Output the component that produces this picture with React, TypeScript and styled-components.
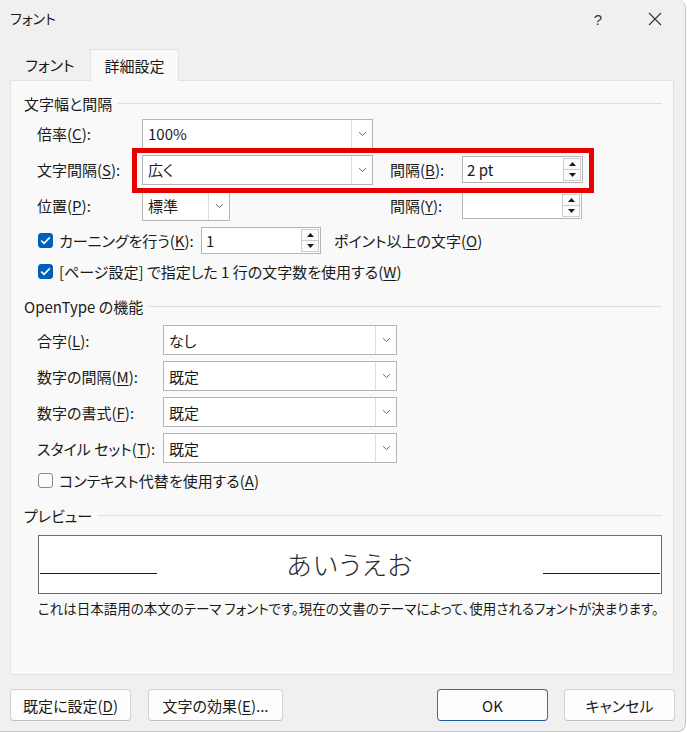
import React from 'react'
import styled, { createGlobalStyle } from 'styled-components'

const GlobalStyle = createGlobalStyle`
  html, body {
    margin: 0;
    padding: 0;
    background: #ffffff;
  }
  body {
    font-family: "Noto Sans CJK JP", "Noto Sans", sans-serif;
    font-feature-settings: "palt";
    font-size: 15px;
    color: #1a1a1a;
  }
`

const Window = styled.div`
  box-sizing: border-box;
  width: 686px;
  height: 732px;
  background: #f0f0f0;
  border-right: 1px solid #c6c6c6;
  border-bottom: 1px solid #c6c6c6;
  border-radius: 0 8px 8px 0;
  display: flex;
  flex-direction: column;
  overflow: hidden;
`

const TitleBar = styled.div`
  height: 38px;
  display: flex;
  align-items: center;
  padding-left: 10px;
  font-size: 14px;
`

const TitleText = styled.div`
  flex: 1;
  padding-bottom: 2px;
`

const CaptionButton = styled.div<{ $ml?: number; $mr?: number }>`
  width: 46px;
  height: 38px;
  margin-left: ${(p) => p.$ml ?? 0}px;
  margin-right: ${(p) => p.$mr ?? 0}px;
  display: flex;
  align-items: center;
  justify-content: center;
  font-family: "Liberation Sans", sans-serif;
  font-size: 15px;
  color: #333;
`

const TabRow = styled.div`
  display: flex;
  align-items: flex-end;
  height: 32px;
  margin-top: 10px;
  padding-left: 10px;
  position: relative;
  z-index: 1;
`

const Tab = styled.div<{ $active?: boolean }>`
  box-sizing: border-box;
  width: ${(p) => (p.$active ? 89 : 80)}px;
  height: ${(p) => (p.$active ? 32 : 30)}px;
  display: flex;
  align-items: center;
  justify-content: center;
  background: ${(p) => (p.$active ? '#f9f9f9' : 'transparent')};
  border: 1px solid ${(p) => (p.$active ? '#e2e2e2' : 'transparent')};
  border-bottom: none;
  margin-bottom: ${(p) => (p.$active ? -1 : 0)}px;
  padding-bottom: ${(p) => (p.$active ? 1 : 2)}px;
`

const Panel = styled.div`
  box-sizing: border-box;
  height: 595px;
  margin: 0 11px 0 10px;
  background: #f9f9f9;
  border: 1px solid #e2e2e2;
  padding: 12px 11px 0 13px;
  display: flex;
  flex-direction: column;
`

const SectionHeader = styled.div<{ $top?: number }>`
  height: 20px;
  display: flex;
  align-items: center;
  gap: 6px;
  margin-top: ${(p) => p.$top ?? 0}px;
`

const Rule = styled.div`
  flex: 1;
  height: 1px;
  background: #dedede;
`

const FormGrid = styled.div<{ $cols: string; $rowH: number; $gap: number; $top: number }>`
  position: relative;
  display: grid;
  grid-template-columns: ${(p) => p.$cols};
  grid-auto-rows: ${(p) => p.$rowH}px;
  row-gap: ${(p) => p.$gap}px;
  align-items: center;
  margin-top: ${(p) => p.$top}px;
  padding-left: 13px;
`

const Label = styled.div`
  white-space: nowrap;
`

const Key = styled.span`
  text-decoration: underline;
  text-underline-offset: 2px;
`

const Select = styled.div<{ $w: number }>`
  box-sizing: border-box;
  width: ${(p) => p.$w}px;
  height: 30px;
  background: #ffffff;
  border: 1px solid #b5b5b5;
  display: flex;
  align-items: stretch;
`

const SelectValue = styled.div`
  flex: 1;
  display: flex;
  align-items: center;
  padding-left: 5px;
`

const ArrowBox = styled.div`
  width: 20px;
  border-left: 1px solid #dcdcdc;
  display: flex;
  align-items: center;
  justify-content: center;
`

const Spinner = styled.div<{ $w: number }>`
  box-sizing: border-box;
  width: ${(p) => p.$w}px;
  height: 27px;
  background: #ffffff;
  border: 1px solid #b5b5b5;
  display: flex;
  align-items: center;
`

const SpinValue = styled.div`
  flex: 1;
  padding-left: 4px;
`

const SpinColumn = styled.div`
  display: flex;
  flex-direction: column;
  padding-right: 1px;
`

const SpinButton = styled.div`
  box-sizing: border-box;
  width: 18px;
  height: 12px;
  border: 1px solid #cccccc;
  background: #fbfbfb;
  display: flex;
  align-items: center;
  justify-content: center;
  & + & {
    margin-top: -1px;
  }
`

const Highlight = styled.div`
  position: absolute;
  left: 108px;
  top: 30px;
  width: 462px;
  height: 45px;
  box-sizing: border-box;
  border: 5px solid #e60000;
  pointer-events: none;
`

const CheckRow = styled.div<{ $h: number; $top: number }>`
  height: ${(p) => p.$h}px;
  margin-top: ${(p) => p.$top}px;
  padding-left: 14px;
  display: flex;
  align-items: center;
  white-space: nowrap;
`

const CheckLabel = styled.div<{ $w?: number }>`
  display: flex;
  align-items: center;
  gap: 6px;
  ${(p) => (p.$w ? `width: ${p.$w}px;` : '')}
`

const Box = styled.span<{ $checked?: boolean }>`
  box-sizing: border-box;
  width: 15px;
  height: 15px;
  border-radius: 3px;
  background: ${(p) => (p.$checked ? '#005fb8' : '#fafafa')};
  border: 1px solid ${(p) => (p.$checked ? '#005fb8' : '#8a8a8a')};
  display: flex;
  align-items: center;
  justify-content: center;
`

const Trailing = styled.div`
  margin-left: 13px;
`

const PreviewBox = styled.div`
  box-sizing: border-box;
  height: 59px;
  margin: 10px 0 0 14px;
  background: #ffffff;
  border: 1px solid #6b6b6b;
  display: flex;
  padding: 0 1px;
`

const PreviewSide = styled.div`
  width: 117px;
  display: flex;
  align-items: flex-end;
  padding-bottom: 19px;
  &::after {
    content: '';
    flex: 1;
    height: 1px;
    background: #1a1a1a;
  }
`

const PreviewText = styled.div`
  flex: 1;
  display: flex;
  align-items: center;
  justify-content: center;
  padding-bottom: 2px;
  font-size: 26px;
  font-weight: 300;
  letter-spacing: 1.5px;
  color: #262626;
`

const Description = styled.div`
  margin: 4px 0 0 14px;
  height: 20px;
  display: flex;
  align-items: center;
  font-size: 13.5px;
  white-space: nowrap;
`

const Footer = styled.div`
  display: flex;
  align-items: center;
  padding: 14px 10px 0 10px;
`

const Button = styled.div<{ $w: number; $default?: boolean; $gap?: number }>`
  box-sizing: border-box;
  width: ${(p) => p.$w}px;
  height: 32px;
  margin-left: ${(p) => p.$gap ?? 0}px;
  background: #fdfdfd;
  border: 1px solid ${(p) => (p.$default ? '#2e6fb5' : '#d3d3d3')};
  border-bottom-color: ${(p) => (p.$default ? '#1d5aa0' : '#bdbdbd')};
  border-radius: 4px;
  display: flex;
  align-items: center;
  justify-content: center;
  white-space: nowrap;
`

const Spacer = styled.div`
  flex: 1;
`

const Chevron = () => (
  <svg width="9" height="6" viewBox="0 0 9 6">
    <path d="M1 1.2 L4.5 4.5 L8 1.2" fill="none" stroke="#6b6b6b" strokeWidth="1" />
  </svg>
)

const Tri = ({ up }: { up?: boolean }) => (
  <svg width="7" height="4" viewBox="0 0 7 4">
    <path d={up ? 'M0 4 L3.5 0 L7 4 Z' : 'M0 0 L3.5 4 L7 0 Z'} fill="#1a1a1a" />
  </svg>
)

const Check = () => (
  <svg width="11" height="9" viewBox="0 0 11 9">
    <path d="M1.2 4.6 L4.1 7.3 L9.8 1.4" fill="none" stroke="#ffffff" strokeWidth="1.6" />
  </svg>
)

const DropDown: React.FC<{ w: number; value: string }> = ({ w, value }) => (
  <Select $w={w}>
    <SelectValue>{value}</SelectValue>
    <ArrowBox>
      <Chevron />
    </ArrowBox>
  </Select>
)

const SpinBox: React.FC<{ w: number; value?: string }> = ({ w, value }) => (
  <Spinner $w={w}>
    <SpinValue>{value}</SpinValue>
    <SpinColumn>
      <SpinButton>
        <Tri up />
      </SpinButton>
      <SpinButton>
        <Tri />
      </SpinButton>
    </SpinColumn>
  </Spinner>
)

const App: React.FC = () => (
  <>
    <GlobalStyle />
    <Window>
      <TitleBar>
        <TitleText>フォント</TitleText>
        <CaptionButton>?</CaptionButton>
        <CaptionButton $ml={11} $mr={7}>
          <svg width="14" height="14" viewBox="0 0 14 14">
            <path d="M1 1 L13 13 M13 1 L1 13" stroke="#333" strokeWidth="1.1" />
          </svg>
        </CaptionButton>
      </TitleBar>

      <TabRow>
        <Tab>フォント</Tab>
        <Tab $active>詳細設定</Tab>
      </TabRow>

      <Panel>
        <SectionHeader>
          文字幅と間隔
          <Rule />
        </SectionHeader>
        <FormGrid $cols="105px 248px 72px 121px" $rowH={31} $gap={5} $top={5}>
          <Label>
            倍率(<Key>C</Key>):
          </Label>
          <DropDown w={231} value="100%" />
          <div />
          <div />

          <Label>
            文字間隔(<Key>S</Key>):
          </Label>
          <DropDown w={231} value="広く" />
          <Label>
            間隔(<Key>B</Key>):
          </Label>
          <SpinBox w={121} value="2 pt" />

          <Label>
            位置(<Key>P</Key>):
          </Label>
          <DropDown w={88} value="標準" />
          <Label>
            間隔(<Key>Y</Key>):
          </Label>
          <SpinBox w={120} />

          <Highlight />
        </FormGrid>

        <CheckRow $h={28} $top={5}>
          <CheckLabel $w={163}>
            <Box $checked>
              <Check />
            </Box>
            <span>
              カーニングを行う(<Key>K</Key>):
            </span>
          </CheckLabel>
          <SpinBox w={120} value="1" />
          <Trailing>
            ポイント以上の文字(<Key>O</Key>)
          </Trailing>
        </CheckRow>
        <CheckRow $h={28} $top={3}>
          <CheckLabel>
            <Box $checked>
              <Check />
            </Box>
            <span>
              [ページ設定] で指定した 1 行の文字数を使用する(<Key>W</Key>)
            </span>
          </CheckLabel>
        </CheckRow>

        <SectionHeader $top={11}>
          OpenType の機能
          <Rule />
        </SectionHeader>
        <FormGrid $cols="126px 234px" $rowH={30} $gap={6} $top={9}>
          <Label>
            合字(<Key>L</Key>):
          </Label>
          <DropDown w={234} value="なし" />
          <Label>
            数字の間隔(<Key>M</Key>):
          </Label>
          <DropDown w={234} value="既定" />
          <Label>
            数字の書式(<Key>F</Key>):
          </Label>
          <DropDown w={234} value="既定" />
          <Label>
            スタイル セット(<Key>T</Key>):
          </Label>
          <DropDown w={234} value="既定" />
        </FormGrid>
        <CheckRow $h={24} $top={5}>
          <CheckLabel>
            <Box />
            <span>
              コンテキスト代替を使用する(<Key>A</Key>)
            </span>
          </CheckLabel>
        </CheckRow>

        <SectionHeader $top={13}>
          プレビュー
          <Rule />
        </SectionHeader>
        <PreviewBox>
          <PreviewSide />
          <PreviewText>あいうえお</PreviewText>
          <PreviewSide />
        </PreviewBox>
        <Description>
          これは日本語用の本文のテーマ フォントです。現在の文書のテーマによって、使用されるフォントが決まります。
        </Description>
      </Panel>

      <Footer>
        <Button $w={121}>
          既定に設定(<Key>D</Key>)
        </Button>
        <Button $w={135} $gap={17}>
          文字の効果(<Key>E</Key>)...
        </Button>
        <Spacer />
        <Button $w={111} $default>
          OK
        </Button>
        <Button $w={111} $gap={16}>
          キャンセル
        </Button>
      </Footer>
    </Window>
  </>
)

export default App
